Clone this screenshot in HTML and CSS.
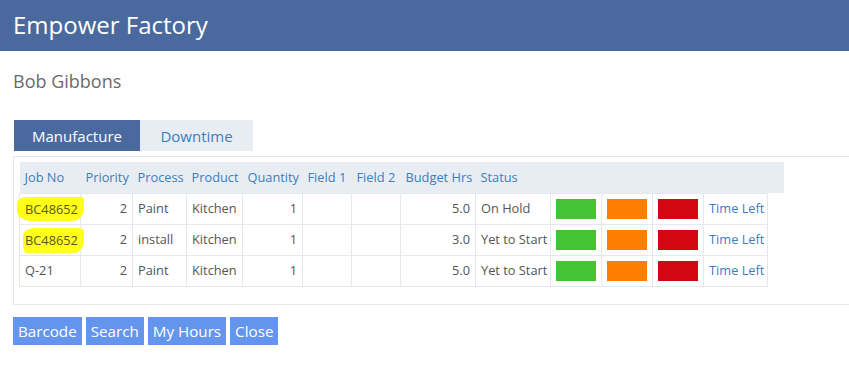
FILE: index.html
```html
<!DOCTYPE html>
<html>
<head>
<meta charset="utf-8">
<link rel="stylesheet" href="styles.css">
</head>
<body>
<header class="topbar"><h1 class="brand">Empower Factory</h1></header>
<main class="content">
  <h2 class="user">Bob Gibbons</h2>
  <nav class="tabs">
    <span class="tab active">Manufacture</span>
    <span class="tab">Downtime</span>
  </nav>
  <section class="panel">
    <table class="jobs">
      <thead>
        <tr>
          <th class="c-job">Job No</th>
          <th class="c-pri">Priority</th>
          <th class="c-proc">Process</th>
          <th class="c-prod">Product</th>
          <th class="c-qty">Quantity</th>
          <th class="c-f1">Field 1</th>
          <th class="c-f2">Field 2</th>
          <th class="c-bud">Budget Hrs</th>
          <th class="c-stat">Status</th>
          <th class="c-sw"></th>
          <th class="c-sw"></th>
          <th class="c-sw"></th>
          <th class="c-time"></th>
          <th class="c-extra"></th>
        </tr>
      </thead>
      <tbody>
        <tr>
          <td><span class="mark mark-a">BC48652</span></td>
          <td class="num">2</td>
          <td>Paint</td>
          <td>Kitchen</td>
          <td class="num">1</td>
          <td></td>
          <td></td>
          <td class="num">5.0</td>
          <td>On Hold</td>
          <td class="sw"><span class="swatch green"></span></td>
          <td class="sw"><span class="swatch orange"></span></td>
          <td class="sw"><span class="swatch red"></span></td>
          <td><a class="link">Time Left</a></td>
        </tr>
        <tr>
          <td><span class="mark mark-b">BC48652</span></td>
          <td class="num">2</td>
          <td>install</td>
          <td>Kitchen</td>
          <td class="num">1</td>
          <td></td>
          <td></td>
          <td class="num">3.0</td>
          <td>Yet to Start</td>
          <td class="sw"><span class="swatch green"></span></td>
          <td class="sw"><span class="swatch orange"></span></td>
          <td class="sw"><span class="swatch red"></span></td>
          <td><a class="link">Time Left</a></td>
        </tr>
        <tr>
          <td>Q-21</td>
          <td class="num">2</td>
          <td>Paint</td>
          <td>Kitchen</td>
          <td class="num">1</td>
          <td></td>
          <td></td>
          <td class="num">5.0</td>
          <td>Yet to Start</td>
          <td class="sw"><span class="swatch green"></span></td>
          <td class="sw"><span class="swatch orange"></span></td>
          <td class="sw"><span class="swatch red"></span></td>
          <td><a class="link">Time Left</a></td>
        </tr>
      </tbody>
    </table>
  </section>
  <div class="actions">
    <button class="btn">Barcode</button>
    <button class="btn">Search</button>
    <button class="btn">My Hours</button>
    <button class="btn">Close</button>
  </div>
</main>
</body>
</html>
```

FILE: styles.css
```css
* { box-sizing: border-box; }
html, body { margin: 0; padding: 0; background: #fff; }
body {
  font-family: "Open Sans", "Noto Sans", sans-serif;
  color: #555;
  width: 849px;
  overflow: hidden;
}
.topbar {
  background: #4a6a9f;
  height: 51px;
  padding-left: 13px;
  display: flex;
  align-items: center;
}
.brand {
  margin: 0;
  color: #fff;
  font-weight: 400;
  font-size: 24px;
  line-height: 1;
  padding-bottom: 2px;
}
.content {
  padding-left: 13px;
}
.user {
  margin: 18px 0 0 0;
  height: 51px;
  font-weight: 400;
  font-size: 18px;
  color: #6b6b6b;
  line-height: 24px;
}
.tabs {
  display: flex;
  margin-left: 1px;
  height: 31px;
}
.tab {
  display: flex;
  align-items: center;
  justify-content: center;
  font-size: 15px;
  background: #e8edf4;
  color: #3b7dbd;
}
.tab.active {
  width: 126px;
  background: #4a6a9f;
  color: #fff;
}
.tab + .tab { width: 113px; }
.panel {
  margin-top: 5px;
  border: 1px solid #e3e8ef;
  border-right: none;
  padding: 5px 0 18px 5px;
  height: 149px;
}
.jobs {
  border-collapse: collapse;
  font-size: 12.8px;
  table-layout: fixed;
  width: 764px;
}
.jobs th {
  background: #e8edf4;
  color: #3b7dbd;
  font-weight: 400;
  text-align: left;
  height: 31px;
  padding: 0 5px;
  white-space: nowrap;
  overflow: visible;
}
.jobs td {
  border: 1px solid #e3e8ef;
  height: 31px;
  padding: 0 5px 2px 5px;
  white-space: nowrap;
  line-height: 18px;
}
.jobs td.sw { padding: 0 5px; }
.jobs td.num { text-align: right; }
.c-job { width: 61px; }
.c-pri { width: 52px; }
.c-proc { width: 54px; }
.c-prod { width: 56px; }
.c-qty { width: 60px; }
.c-f1 { width: 49px; }
.c-f2 { width: 49px; }
.c-bud { width: 75px; }
.c-stat { width: 75px; }
.c-sw { width: 51px; }
.c-time { width: 64px; }
.c-extra { width: 16px; }
.swatch {
  display: block;
  width: 40px;
  height: 20px;
}
.swatch.green { background: #44c433; }
.swatch.orange { background: #ff7f00; }
.swatch.red { background: #d10812; }
.link { color: #3b7dbd; text-decoration: none; }
.mark {
  display: inline-block;
  vertical-align: middle;
  background: #ffff1a;
  color: #5a5a12;
  height: 24px;
  line-height: 24px;
  padding: 0 6px 0 8px;
  margin: -4px 0 -4px -8px;
}
.mark-a {
  border-radius: 10px 3px 12px 14px / 6px 3px 12px 10px;
}
.mark-b {
  margin-left: -2px;
  padding-left: 2px;
  position: relative;
  top: 1px;
  height: 25px;
  border-radius: 12px 6px 10px 3px / 8px 3px 12px 12px;
}
.actions {
  margin-top: 12px;
  display: flex;
  gap: 4px;
}
.btn {
  font-family: "Open Sans", "Noto Sans", sans-serif;
  background: #6495ed;
  color: #fff;
  border: none;
  height: 28px;
  padding: 0 5px;
  font-size: 15.2px;
  margin: 0;
}
```
